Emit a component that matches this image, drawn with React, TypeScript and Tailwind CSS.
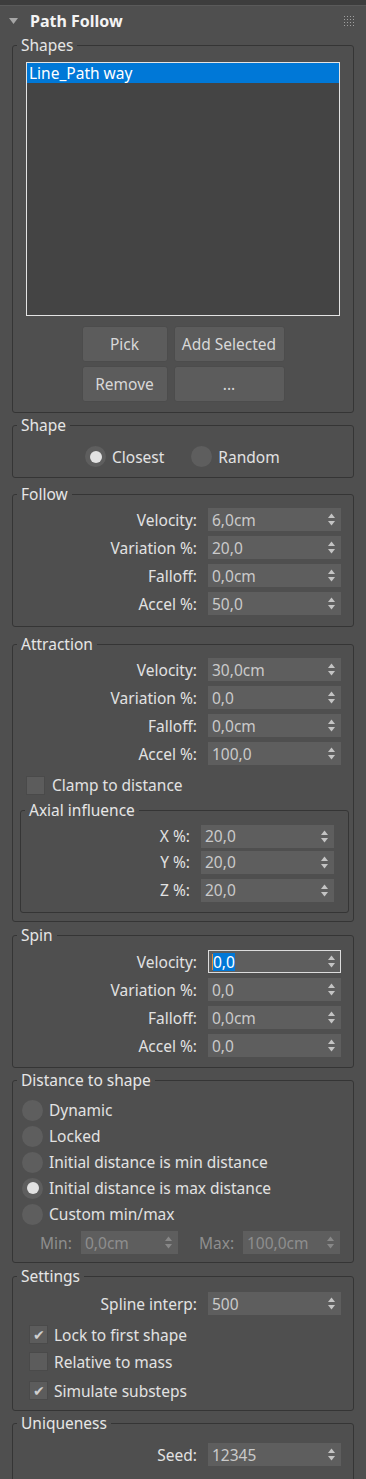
import React from "react";

function Arrows({ dim }: { dim?: boolean }) {
  const c = dim ? "#888888" : "#c4c4c4";
  return (
    <svg width="7" height="13" viewBox="0 0 7 13">
      <polygon points="0,5 3.5,0.5 7,5" fill={c} />
      <polygon points="0,8 7,8 3.5,12.5" fill={c} />
    </svg>
  );
}

function Spinner({ value, focused, dim, small }: { value: string; focused?: boolean; dim?: boolean; small?: boolean }) {
  return (
    <div
      className={
        (small ? "w-[97px] " : "w-[133px] ") +
        (focused ? "border border-[#dcdcdc] pl-[3px] " : "border border-[#5e5e5e] pl-[3px] ") +
        "flex h-[23px] items-center justify-between bg-[#5e5e5e] pr-[5px]"
      }
    >
      {focused ? (
        <span className="flex items-center">
          <span className="h-[16px] w-[1px] bg-[#e08a3a]" />
          <span className="bg-[#0078d7] leading-[18px] text-white">{value}</span>
        </span>
      ) : (
        <span className={dim ? "text-[#8e8e8e]" : "text-[#cacaca]"}>{value}</span>
      )}
      <Arrows dim={dim} />
    </div>
  );
}

function Row({ label, value, focused, mt }: { label: string; value: string; focused?: boolean; mt: string }) {
  return (
    <div className={mt + " flex h-[23px] items-center justify-end gap-[11px] pr-[12px]"}>
      <span className="text-[#e2e2e2]">{label}</span>
      <Spinner value={value} focused={focused} />
    </div>
  );
}

function Legend({ children }: { children: React.ReactNode }) {
  return <legend className="ml-[4px] px-[4px] leading-[20px] text-[#e6e6e6]">{children}</legend>;
}

function Radio({ checked }: { checked?: boolean }) {
  return (
    <span className="flex h-[21px] w-[21px] shrink-0 items-center justify-center rounded-full bg-[#5e5e5e]">
      {checked ? <span className="h-[12px] w-[12px] rounded-full bg-[#e2e2e2]" /> : null}
    </span>
  );
}

function Check({ checked }: { checked?: boolean }) {
  return (
    <span className="flex h-[19px] w-[19px] shrink-0 items-center justify-center border border-[#4a4a4a] bg-[#5c5c5c] text-[14px] leading-none text-[#cfcfcf]">
      {checked ? "✔" : ""}
    </span>
  );
}

function Button({ children, w }: { children: React.ReactNode; w: string }) {
  return (
    <div className={w + " flex h-[36px] items-center justify-center rounded-[3px] border border-[#4c4c4c] bg-[#5c5c5c] text-[#d8d8d8]"}>
      {children}
    </div>
  );
}

export default function App() {
  return (
    <div className="h-[1479px] w-[366px] overflow-hidden bg-[#4f4f4f] font-['Noto_Sans',sans-serif] text-[15.5px] leading-[20px] text-[#e2e2e2]">
      <div className="h-[6px] border-b border-[#5a5a5a] bg-[#3d3d3d]" />
      <div className="flex h-[29px] items-center pl-[9px] pr-[12px]">
        <svg width="9" height="6" viewBox="0 0 9 6">
          <polygon points="0,0 9,0 4.5,6" fill="#a6a6a6" />
        </svg>
        <span className="ml-[12px] text-[16px] font-bold text-[#f4f4f4]">Path Follow</span>
        <svg className="ml-auto" width="10" height="10" viewBox="0 0 10 10">
          {[0, 3, 6, 9].map((y) =>
            [0, 3, 6, 9].map((x) => <rect key={x + "-" + y} x={x} y={y} width="1" height="1" fill="#a0a0a0" />)
          )}
        </svg>
      </div>

      <div className="px-[12px]">
        {/* Shapes */}
        <fieldset className="rounded-[3px] border border-[#353535] pb-[10px]">
          <Legend>Shapes</Legend>
          <div className="mx-[13px] mt-[7px] h-[254px] border border-[#e4e4e4] bg-[#444444]">
            <div className="h-[20px] bg-[#0078d7] pl-[2px] leading-[20px] text-white">Line_Path way</div>
          </div>
          <div className="mt-[10px] flex flex-col items-center gap-[4px]">
            <div className="flex gap-[6px]">
              <Button w="w-[86px]">Pick</Button>
              <Button w="w-[111px]">Add Selected</Button>
            </div>
            <div className="flex gap-[6px]">
              <Button w="w-[86px]">Remove</Button>
              <Button w="w-[111px]">...</Button>
            </div>
          </div>
        </fieldset>

        {/* Shape */}
        <fieldset className="mt-[2px] rounded-[3px] border border-[#353535] pb-[10px]">
          <Legend>Shape</Legend>
          <div className="mt-[11px] flex h-[21px] items-center pl-[72px]">
            <Radio checked />
            <span className="ml-[6px]">Closest</span>
            <span className="ml-[27px]" />
            <Radio />
            <span className="ml-[6px]">Random</span>
          </div>
        </fieldset>

        {/* Follow */}
        <fieldset className="mt-[6px] rounded-[3px] border border-[#353535] pb-[11px]">
          <Legend>Follow</Legend>
          <Row mt="mt-[4px]" label="Velocity:" value="6,0cm" />
          <Row mt="mt-[5px]" label="Variation %:" value="20,0" />
          <Row mt="mt-[5px]" label="Falloff:" value="0,0cm" />
          <Row mt="mt-[5px]" label="Accel %:" value="50,0" />
        </fieldset>

        {/* Attraction */}
        <fieldset className="mt-[7px] rounded-[3px] border border-[#353535] pb-[8px]">
          <Legend>Attraction</Legend>
          <Row mt="mt-[4px]" label="Velocity:" value="30,0cm" />
          <Row mt="mt-[5px]" label="Variation %:" value="0,0" />
          <Row mt="mt-[5px]" label="Falloff:" value="0,0cm" />
          <Row mt="mt-[5px]" label="Accel %:" value="100,0" />
          <div className="mt-[10px] flex h-[20px] items-center pl-[13px]">
            <Check />
            <span className="ml-[7px]">Clamp to distance</span>
          </div>
          <fieldset className="ml-[7px] mr-[4px] mt-[5px] rounded-[3px] border border-[#353535] pb-[11px]">
            <Legend>Axial influence</Legend>
            <div className="mt-[5px] flex h-[22px] items-center justify-end gap-[11px] pr-[14px]">
              <span>X %:</span>
              <Spinner value="20,0" />
            </div>
            <div className="mt-[4px] flex h-[22px] items-center justify-end gap-[11px] pr-[14px]">
              <span>Y %:</span>
              <Spinner value="20,0" />
            </div>
            <div className="mt-[6px] flex h-[22px] items-center justify-end gap-[11px] pr-[14px]">
              <span>Z %:</span>
              <Spinner value="20,0" />
            </div>
          </fieldset>
        </fieldset>

        {/* Spin */}
        <fieldset className="mt-[3px] rounded-[3px] border border-[#353535] pb-[10px]">
          <Legend>Spin</Legend>
          <Row mt="mt-[5px]" label="Velocity:" value="0,0" focused />
          <Row mt="mt-[5px]" label="Variation %:" value="0,0" />
          <Row mt="mt-[5px]" label="Falloff:" value="0,0cm" />
          <Row mt="mt-[5px]" label="Accel %:" value="0,0" />
        </fieldset>

        {/* Distance to shape */}
        <fieldset className="mt-[2px] rounded-[3px] border border-[#353535] pb-[8px]">
          <Legend>Distance to shape</Legend>
          <div className="mt-[7px] flex flex-col pl-[9px]">
            {[
              ["Dynamic", false],
              ["Locked", false],
              ["Initial distance is min distance", false],
              ["Initial distance is max distance", true],
              ["Custom min/max", false],
            ].map(([t, c]) => (
              <div key={t as string} className="flex h-[26px] items-center">
                <Radio checked={c as boolean} />
                <span className="ml-[6px]">{t as string}</span>
              </div>
            ))}
          </div>
          <div className="mt-[4px] flex h-[23px] items-center pl-[27px]">
            <span className="w-[41px] text-[#8e8e8e]">Min:</span>
            <Spinner value="0,0cm" dim small />
            <span className="ml-[21px] w-[44px] text-[#8e8e8e]">Max:</span>
            <Spinner value="100,0cm" dim small />
          </div>
        </fieldset>

        {/* Settings */}
        <fieldset className="mt-[3px] rounded-[3px] border border-[#353535] pb-[10px]">
          <Legend>Settings</Legend>
          <Row mt="mt-[6px]" label="Spline interp:" value="500" />
          <div className="mt-[10px] flex h-[19px] items-center pl-[16px]">
            <Check checked />
            <span className="ml-[6px]">Lock to first shape</span>
          </div>
          <div className="mt-[8px] flex h-[19px] items-center pl-[16px]">
            <Check />
            <span className="ml-[6px]">Relative to mass</span>
          </div>
          <div className="mt-[10px] flex h-[19px] items-center pl-[16px]">
            <Check checked />
            <span className="ml-[6px]">Simulate substeps</span>
          </div>
        </fieldset>

        {/* Uniqueness */}
        <fieldset className="mt-[2px] rounded-[3px] border border-[#353535] pb-[40px]">
          <Legend>Uniqueness</Legend>
          <Row mt="mt-[10px]" label="Seed:" value="12345" />
        </fieldset>
      </div>
    </div>
  );
}
